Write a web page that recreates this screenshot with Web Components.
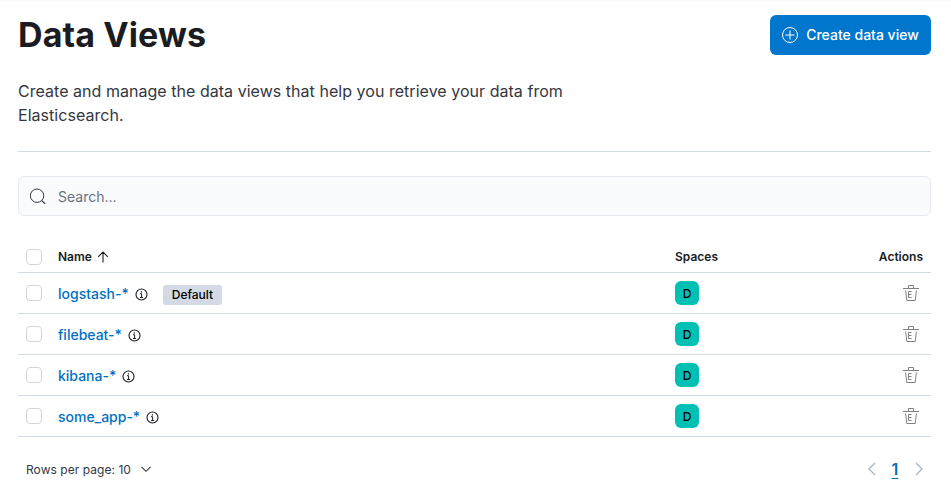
<!DOCTYPE html>
<html>
<head>
<meta charset="utf-8">
<title>Data Views</title>
<style>
  html, body { margin:0; padding:0; background:#fff; }
  body { font-family:Inter, "Liberation Sans", sans-serif; color:#1a1c21; }
</style>
</head>
<body>
<dv-page>
  <dv-header title="Data Views" slot="header">Create and manage the data views that help you retrieve your data from Elasticsearch.</dv-header>
  <dv-search slot="search" placeholder="Search..."></dv-search>
  <dv-table slot="table">
    <dv-row name="logstash-*" default></dv-row>
    <dv-row name="filebeat-*"></dv-row>
    <dv-row name="kibana-*"></dv-row>
    <dv-row name="some_app-*"></dv-row>
  </dv-table>
  <dv-footer slot="footer"></dv-footer>
</dv-page>

<script>
const ICONS = {
  plus: `<svg width="16" height="16" viewBox="0 0 16 16" fill="none" stroke="currentColor"><circle cx="8" cy="8" r="7.5"/><path d="M8 3.5v9M3.5 8h9"/></svg>`,
  search: `<svg width="16" height="16" viewBox="0 0 16 16" fill="none" stroke="currentColor"><path d="M7 1a6.7 6.7 0 1 0 .1 13.4A6.7 6.7 0 0 0 7 1z"/><path d="M12 12.8l3.2 3.1" stroke-width="1.2"/></svg>`,
  up: `<svg width="12" height="12" viewBox="0 0 12 12" fill="none" stroke="currentColor" stroke-width="1.1"><path d="M6 1v10.5M1.2 5.8L6 1l4.8 4.8"/></svg>`,
  info: `<svg width="13" height="13" viewBox="0 0 13 13" fill="none" stroke="currentColor"><circle cx="6.5" cy="6.5" r="5.5" stroke-width="1.1"/><path d="M5 5.7h1.6v3.6M5 9.5h3.1" stroke-width="1"/><path d="M6.4 3.2v1.2" stroke-width="1.2"/></svg>`,
  trash: `<svg width="16" height="16" viewBox="0 0 16 16" fill="none" stroke="currentColor"><path d="M0 3.5h16M5.5 3.5v-3h5v3M2.6 5.5l1.2 10h8.4l1.2-10M5.5 6.5h3M5.5 9.5h3M5.5 12.5h3M5.5 6.5v6"/></svg>`,
  down: `<svg width="12" height="12" viewBox="0 0 12 12" fill="none" stroke="currentColor" stroke-width="1.1"><path d="M1.5 3.8L6 8.3l4.5-4.5"/></svg>`,
  left: `<svg width="16" height="16" viewBox="0 0 16 16" fill="none" stroke="currentColor" stroke-width="1.3"><path d="M12 2L6 8l6 6"/></svg>`,
  right: `<svg width="16" height="16" viewBox="0 0 16 16" fill="none" stroke="currentColor" stroke-width="1.3"><path d="M5 2l6 6-6 6"/></svg>`
};

class DvElement extends HTMLElement {
  render(html) {
    this.attachShadow({mode:"open"});
    const template = document.createElement("template");
    template.innerHTML = html;
    this.shadowRoot.append(template.content.cloneNode(true));
  }
}

class DvPage extends DvElement {
  constructor() {
    super();
    this.render(`
      <style>
        :host { display:block; padding:0 20px 0 18px; height:490px; box-sizing:border-box; overflow:hidden; box-shadow:inset 0 2px 2px -1px rgba(0,0,0,.03); }
        .search { display:block; margin-top:24px; }
        .table { display:block; margin-top:25px; }
      </style>
      <slot name="header"></slot>
      <div class="search"><slot name="search"></slot></div>
      <div class="table"><slot name="table"></slot></div>
      <slot name="footer"></slot>`);
  }
}

class DvHeader extends DvElement {
  constructor() {
    super();
    this.render(`
      <style>
        :host { display:block; padding-top:15px; }
        .top { display:flex; justify-content:space-between; align-items:flex-start; }
        h1 { margin:0; font-size:34px; line-height:40px; font-weight:700; letter-spacing:.1px; color:#1a1c21; }
        button { display:flex; align-items:center; gap:8px; height:40px; width:161px; padding:0 12px; box-sizing:border-box; white-space:nowrap;
          border:0; border-radius:6px; background:#0077cc; color:#fff; font:500 14px/20px Inter, sans-serif; justify-content:center; }
        button svg { display:block; }
        p { margin:24px 0 0; max-width:575px; font-size:16px; line-height:24px; letter-spacing:.035px; color:#343741; }
        hr { margin:24px 0 0; border:0; border-top:1px solid #d3dae6; }
      </style>
      <div class="top"><h1></h1><button>${ICONS.plus}<span>Create data view</span></button></div>
      <p><slot></slot></p>
      <hr>`);
    this.shadowRoot.querySelector("h1").textContent = this.getAttribute("title");
  }
}

class DvSearch extends DvElement {
  constructor() {
    super();
    this.render(`
      <style>
        :host { display:block; }
        .box { display:flex; align-items:center; gap:12px; height:40px; padding:0 11px; box-sizing:border-box;
          background:#fafbfd; border:1px solid #e6e9f0; border-radius:6px; color:#343741; }
        svg { display:block; }
        span { font-size:14px; color:#69707d; }
      </style>
      <div class="box">${ICONS.search}<span></span></div>`);
    this.shadowRoot.querySelector("span").textContent = this.getAttribute("placeholder");
  }
}

class DvCheckbox extends DvElement {
  constructor() {
    super();
    this.render(`
      <style>
        :host { display:block; width:16px; height:16px; box-sizing:border-box; background:#fff; border:1px solid #d3d5da; border-radius:4px; }
      </style>`);
  }
}
customElements.define("dv-checkbox", DvCheckbox);

const COLUMNS = `display:grid; grid-template-columns:32px 1fr 182px 66px; align-items:center; padding:0 8px;`;

class DvTable extends DvElement {
  constructor() {
    super();
    this.render(`
      <style>
        :host { display:block; }
        .head { ${COLUMNS} height:32px; border-bottom:1px solid #d3dae6; font-size:12px; font-weight:600; color:#1a1c21; box-sizing:border-box; }
        .name { display:flex; align-items:center; gap:5px; }
        .name svg { display:block; }
        .actions { text-align:right; }
      </style>
      <div class="head">
        <dv-checkbox></dv-checkbox>
        <div class="name">Name ${ICONS.up}</div>
        <div>Spaces</div>
        <div class="actions">Actions</div>
      </div>
      <slot></slot>`);
  }
}

class DvRow extends DvElement {
  constructor() {
    super();
    this.render(`
      <style>
        :host { display:block; }
        .row { ${COLUMNS} height:41px; border-bottom:1px solid #d3dae6; box-sizing:border-box; }
        .name { display:flex; align-items:center; padding-top:1px; }
        a { font-size:14px; font-weight:500; color:#0071c2; text-decoration:none; }
        .info { display:block; margin:1px 0 0 6px; color:#1a1c21; }
        .info svg, .trash svg { display:block; }
        .badge { margin:2px 0 0 15px; height:20px; padding:0 9px; display:flex; align-items:center; border-radius:3px;
          background:#d3dae6; font-size:12px; font-weight:500; color:#000; }
        .avatar { width:24px; height:24px; border-radius:6px; background:#00bfb3; color:#000; font-size:12px; font-weight:500;
          display:flex; align-items:center; justify-content:center; }
        .trash { justify-self:end; margin-right:4px; color:#808080; }
      </style>
      <div class="row">
        <dv-checkbox></dv-checkbox>
        <div class="name"><a></a><span class="info">${ICONS.info}</span>${this.hasAttribute("default") ? `<span class="badge">Default</span>` : ""}</div>
        <div class="avatar">D</div>
        <div class="trash">${ICONS.trash}</div>
      </div>`);
    this.shadowRoot.querySelector("a").textContent = this.getAttribute("name");
  }
}

class DvFooter extends DvElement {
  constructor() {
    super();
    this.render(`
      <style>
        :host { display:flex; justify-content:space-between; align-items:center; height:40px; margin-top:12px; padding-left:8px; }
        .rows { display:flex; align-items:center; gap:9px; font-size:12px; letter-spacing:.05px; color:#343741; }
        svg { display:block; }
        .pager { display:flex; align-items:center; gap:8px; padding-right:4px; color:#abb4c4; }
        .page { font-size:16px; font-weight:600; color:#0071c2; text-decoration:underline; text-underline-offset:3px; width:16px; text-align:center; }
      </style>
      <div class="rows">Rows per page: 10 ${ICONS.down}</div>
      <div class="pager">${ICONS.left}<span class="page">1</span>${ICONS.right}</div>`);
  }
}

customElements.define("dv-page", DvPage);
customElements.define("dv-header", DvHeader);
customElements.define("dv-search", DvSearch);
customElements.define("dv-table", DvTable);
customElements.define("dv-row", DvRow);
customElements.define("dv-footer", DvFooter);
</script>
</body>
</html>
